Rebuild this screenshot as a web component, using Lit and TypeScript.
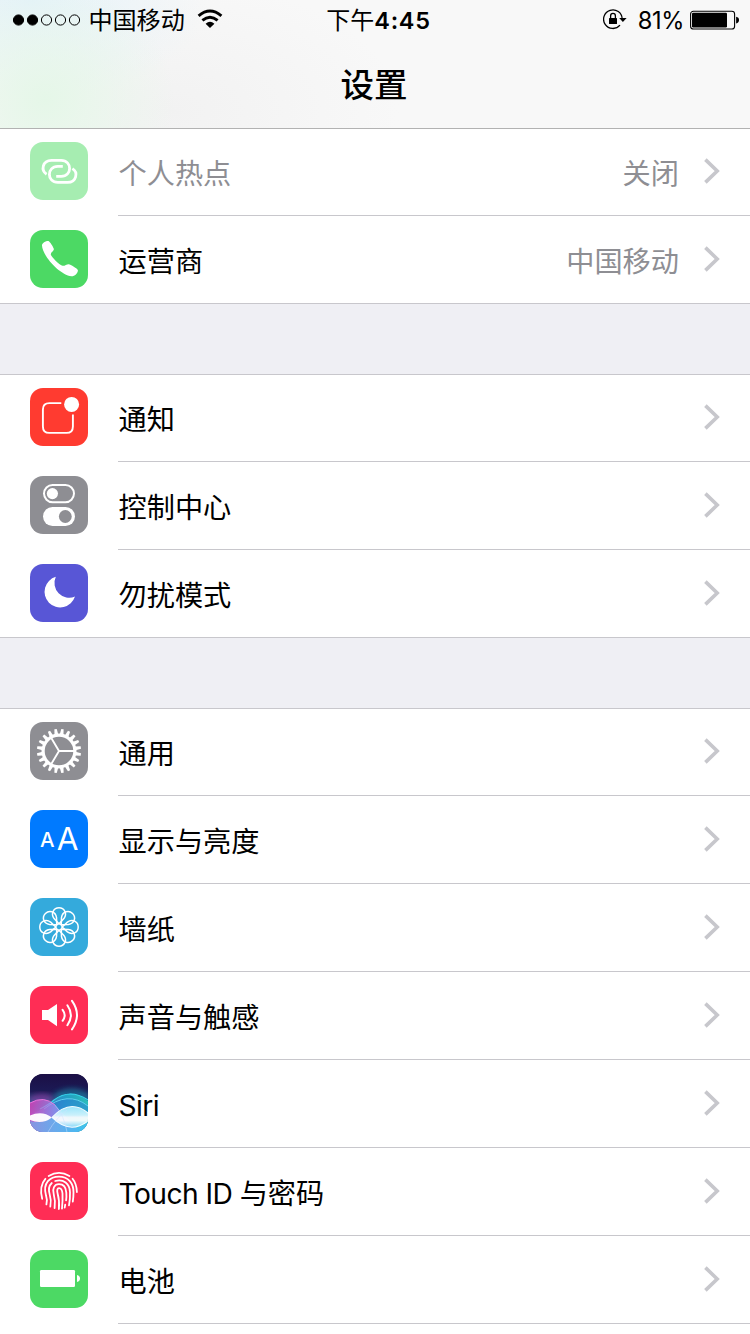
import { LitElement, html, css, svg, TemplateResult } from "lit";
import { customElement, property } from "lit/decorators.js";

interface Item {
  icon: string;
  label: string;
  value?: string;
  dimmed?: boolean;
}

const GROUPS: Item[][] = [
  [
    { icon: "hotspot", label: "个人热点", value: "关闭", dimmed: true },
    { icon: "phone", label: "运营商", value: "中国移动" },
  ],
  [
    { icon: "notifications", label: "通知" },
    { icon: "control", label: "控制中心" },
    { icon: "moon", label: "勿扰模式" },
  ],
  [
    { icon: "gear", label: "通用" },
    { icon: "display", label: "显示与亮度" },
    { icon: "wallpaper", label: "墙纸" },
    { icon: "sound", label: "声音与触感" },
    { icon: "siri", label: "Siri" },
    { icon: "touch", label: "Touch ID 与密码" },
    { icon: "battery", label: "电池" },
  ],
];

const COLORS: Record<string, string> = {
  hotspot: "#a6edb1",
  phone: "#4cd964",
  notifications: "#ff3b30",
  control: "#8e8e93",
  moon: "#5856d6",
  gear: "#8e8e93",
  display: "#007aff",
  wallpaper: "#34aadc",
  sound: "#ff2d55",
  siri: "#1c1246",
  touch: "#ff2d55",
  battery: "#4cd964",
};

const LINK = "M16.6 32.2C10.6 28.6 12.4 18.4 21.5 18.4H31.2C42.4 18.4 42.4 34.4 31.2 34.4H26.2";

const GLYPHS: Record<string, TemplateResult> = {
  hotspot: svg`
    <g fill="none" stroke="#fff" stroke-width="2.8">
      <path d=${LINK} />
      <path d=${LINK} transform="rotate(180 29.5 29.4)" />
    </g>`,
  phone: svg`<path fill="#fff" d="M12 15.6C12 13 15.8 11 18.3 11.1C19.8 11.2 23.9 18 23.9 19.3C23.8 21.2 20.6 22.4 20.8 24.4C21.4 27 29.8 35 32.6 35.8C34.6 36.2 36.8 34 38.8 34.2C40.4 34.4 47.6 38.6 47.9 40C48 43.4 44.6 46.3 41.5 46.2C29.5 45 12.3 25.6 12 15.6Z" />`,
  notifications: svg`
    <path fill="none" stroke="#fff" stroke-width="1.9" d="M31.3 15.1H19.4Q12.9 15.1 12.9 21.6V38.4Q12.9 44.9 19.4 44.9H36.4Q42.9 44.9 42.9 38.4V26.6" />
    <circle cx="41.6" cy="16.4" r="7.5" fill="#fff" />`,
  control: svg`
    <rect x="14" y="9" width="30" height="17.2" rx="8.6" fill="none" stroke="#fff" stroke-width="2" />
    <circle cx="22.4" cy="17.6" r="5.6" fill="#fff" />
    <rect x="13" y="31" width="32" height="19" rx="9.5" fill="#fff" />
    <circle cx="35.3" cy="40.5" r="6.4" fill="#8e8e93" />`,
  moon: svg`<path fill="#fff" d="M25.8 12.8A15.6 15.6 0 1 0 45 32.6A14.8 14.8 0 0 1 25.8 12.8Z" />`,
  gear: svg`
    <g fill="#fff">
      ${Array.from({ length: 20 }, (_, i) => i * 18 + 9).map(
        (a) => svg`<path transform=${`rotate(${a} 29 29)`} d="M27.1 12.5L27.8 6.9H30.2L30.9 12.5Z" />`
      )}
    </g>
    <g fill="none" stroke="#fff">
      <circle cx="29" cy="29" r="15.9" stroke-width="3.2" />
      <path stroke-width="1.9" d="M44 29H29L21 15.6M29 29L21 42.4" />
    </g>`,
  display: svg`
    <g fill="#fff" text-anchor="middle" font-family="Inter, sans-serif">
      <text x="17.2" y="37" font-size="20.5" font-weight="500">A</text>
      <text x="37.5" y="39.7" font-size="31.5" font-weight="400">A</text>
    </g>`,
  wallpaper: svg`
    <g fill="none" stroke="#fff" stroke-width="1.5" transform="translate(29 29)">
      ${[0, 45, 90, 135, 180, 225, 270, 315].map(
        (a) => svg`<path transform=${`rotate(${a})`} d="M0 -3.2L-4.9 -8.4C-8.6 -13.4 -5.4 -19.2 0 -19.2S8.6 -13.4 4.9 -8.4Z" />`
      )}
      <circle r="3.2" />
    </g>`,
  sound: svg`
    <path fill="#fff" d="M12 24H18L27 18V40.3L18 34H12Z" />
    <g fill="none" stroke="#fff" stroke-width="2" stroke-linecap="round">
      <path d="M32.6 23.8Q36.8 29.3 32.6 34.8" />
      <path d="M37.4 19.2Q44.4 29.2 37.4 39.2" />
      <path d="M42 14.8Q52 29 42 43.4" />
    </g>`,
  siri: svg`
    <defs>
      <linearGradient id="sky" x1="0" y1="0" x2="0" y2="1">
        <stop offset="0" stop-color="#1b0f45" />
        <stop offset=".3" stop-color="#1c1a55" />
        <stop offset=".5" stop-color="#2a5a8e" />
        <stop offset="1" stop-color="#4aa0dc" />
      </linearGradient>
      <linearGradient id="pink" x1="0" y1="0" x2="1" y2="0">
        <stop offset="0" stop-color="#f03cc0" />
        <stop offset=".5" stop-color="#a88cf0" />
        <stop offset="1" stop-color="#5aa8f0" />
      </linearGradient>
      <linearGradient id="teal" x1="0" y1="0" x2="1" y2="0">
        <stop offset="0" stop-color="#6a74d8" stop-opacity=".5" />
        <stop offset=".6" stop-color="#22b8dc" />
        <stop offset="1" stop-color="#2fe0c8" />
      </linearGradient>
      <linearGradient id="low" x1="0" y1="0" x2="1" y2="0">
        <stop offset="0" stop-color="#7fa0e6" />
        <stop offset="1" stop-color="#3fc0f4" />
      </linearGradient>
      <linearGradient id="lens" x1="0" y1="0" x2="0" y2="1">
        <stop offset="0" stop-color="#a4ecff" />
        <stop offset=".42" stop-color="#d8f8ff" />
        <stop offset=".52" stop-color="#fff" />
        <stop offset=".68" stop-color="#fff" />
        <stop offset="1" stop-color="#8adcfa" />
      </linearGradient>
      <filter id="soft" x="-20%" y="-150%" width="140%" height="400%"><feGaussianBlur stdDeviation="3" /></filter>
    </defs>
    <rect width="58" height="58" fill="url(#sky)" />
    <path filter="url(#soft)" fill="none" stroke="#e038c8" stroke-width="4" opacity=".7" d="M0 27Q12 20 22 26" />
    <path filter="url(#soft)" fill="none" stroke="#1ec8d8" stroke-width="4" opacity=".7" d="M26 23Q42 13 58 23" />
    <path fill="url(#teal)" opacity=".75" d="M0 40Q14 36 22 28Q40 12 58 27V58H0Z" />
    <path fill="none" stroke="#37d6ec" stroke-width="1.1" d="M10 35Q20 30 24 26Q40 14 58 26" />
    <path fill="#2c77d8" opacity=".45" d="M14 34Q36 16 58 31V44H14Z" />
    <path fill="none" stroke="#63d8f0" stroke-width=".9" d="M14 35Q38 16 58 32" />
    <path fill="url(#pink)" opacity=".72" d="M0 29Q14 21 25 31Q36 43 50 58H0Z" />
    <path fill="none" stroke="#f27be0" stroke-width=".9" d="M0 29Q14 21 25 31" />
    <path fill="url(#low)" opacity=".85" d="M0 47Q12 50 22 43.4Q40 62 58 48V58H0Z" />
    <path fill="#fff" opacity=".96" d="M0 41.5Q12 36 22 43.4Q12 51 0 46Z" />
    <path fill="url(#lens)" opacity=".92" d="M22 43.4Q40 24 58 39V47Q40 61 22 43.4Z" />
    <path fill="none" stroke="#f2fcff" stroke-width="1.1" d="M22 43.4Q40 24 58 39M22 43.4Q40 61 58 47" />
    <path fill="none" stroke="#cfe4ff" stroke-width=".8" opacity=".6" d="M25 31Q34 41 37 58M18 58Q26 44 37 36" />`,
  touch: svg`
    <g fill="none" stroke="#fff" stroke-width="1.8" stroke-linecap="round">
      <path d="M18.7 14.1Q29 7.8 39.4 14.1" />
      <path d="M15.4 16.8Q8.9 24 12.2 36.8" />
      <path d="M42.6 16.8Q46.6 21.8 46.9 30" />
      <path d="M16.4 42.4Q17.6 38 16 33.4C12.4 20.6 20.4 14.6 29 14.6C38.4 14.6 43.6 21.4 43.5 30.2Q43.5 35.6 42.8 39.6" />
      <path d="M20.3 44.6Q21.6 38.6 19.7 32.6C18.1 27.2 19.4 23.2 21.8 21" />
      <path d="M25.2 19C33.4 16.4 39.8 21.8 40 30.2Q40.2 37.4 39 43.4" />
      <path d="M24.6 46.2Q25.6 38.6 23.7 32C22 26.8 24.4 22.2 29 22.2C34 22.2 36 26 36.3 30.6Q36.6 34.6 36.1 38.4" />
      <path d="M35.2 42.6L34.7 45.6" />
      <path d="M28.9 47Q29.7 38.4 27.6 31.4C26.7 28.2 27.4 26.1 29 26.1C31.6 26.1 32.2 28.6 32.5 31.4Q32.8 38 32 46.6" />
    </g>`,
  battery: svg`
    <rect x="10" y="20" width="35" height="17" rx="1.2" fill="#fff" />
    <path fill="#fff" d="M47 25Q50 25.6 50 28.5T47 32Z" />`,
};

@customElement("settings-row")
class SettingsRow extends LitElement {
  @property({ attribute: false }) item!: Item;

  static styles = css`
    :host {
      display: flex;
      height: 88px;
      box-sizing: border-box;
      padding-left: 30px;
      gap: 30px;
    }
    .icon {
      flex: none;
      width: 58px;
      height: 58px;
      margin-top: 14px;
      border-radius: 13px;
      overflow: hidden;
    }
    .body {
      flex: 1;
      display: flex;
      align-items: center;
      padding-right: 29px;
      border-bottom: 1px solid #c8c7cc;
    }
    :host([last]) .body {
      border-bottom-color: transparent;
    }
    .label,
    .value {
      font-size: 28.2px;
      line-height: 40px;
      padding-top: 5px;
      white-space: pre;
    }
    .label {
      flex: 1;
      padding-left: 0.5px;
      color: #000;
    }
    .latin {
      letter-spacing: -0.55px;
    }
    .value,
    .dimmed {
      color: #8e8e93;
    }
    .chevron {
      flex: none;
      width: 18px;
      height: 28px;
      margin: 0 0 2px 24px;
    }
  `;

  render() {
    const { icon, label, value, dimmed } = this.item;
    const latin = label.match(/^[A-Za-z ]*/)![0];
    return html`
      <svg class="icon" viewBox="0 0 58 58">
        <rect width="58" height="58" fill=${COLORS[icon]} />
        ${GLYPHS[icon]}
      </svg>
      <div class="body">
        <span class="label ${dimmed ? "dimmed" : ""}"
          >${latin ? html`<span class="latin">${latin}</span>` : null}${label.slice(latin.length)}</span
        >
        ${value ? html`<span class="value">${value}</span>` : null}
        <svg class="chevron" viewBox="0 0 18 28">
          <path d="M2.4 2.6L14.2 14L2.4 25.4" fill="none" stroke="#c7c7cc" stroke-width="3.6" />
        </svg>
      </div>
    `;
  }
}

@customElement("status-bar")
class StatusBar extends LitElement {
  static styles = css`
    :host {
      display: grid;
      grid-template-columns: 1fr auto 1fr;
      align-items: center;
      height: 40px;
      padding: 0 10px 0 12px;
      color: #000;
    }
    .side {
      display: flex;
      align-items: center;
    }
    .right {
      justify-content: flex-end;
    }
    svg {
      flex: none;
      display: block;
    }
    .carrier {
      font-size: 24.1px;
      line-height: 38px;
      margin: 2px 12px 0 7.4px;
    }
    .time {
      font-size: 24px;
      line-height: 38px;
      padding: 2px 0 0 5px;
    }
    .clock {
      font-weight: 600;
      font-size: 23.5px;
      letter-spacing: 0.7px;
    }
    .percent {
      font-size: 23.6px;
      line-height: 38px;
      letter-spacing: -0.4px;
      margin: 2px 6px 0 11px;
    }
    .lock,
    .wifi {
      margin-bottom: 2px;
    }
  `;

  render() {
    return html`
      <div class="side">
        <svg width="69" height="12" viewBox="0 0 69 12">
          ${[0, 1, 2, 3, 4].map(
            (i) => svg`<circle cx=${6.5 + i * 14} cy="6" r="5.1" fill=${i < 2 ? "#000" : "none"} stroke="#000" stroke-width="1" />`
          )}
        </svg>
        <span class="carrier">中国移动</span>
        <svg class="wifi" width="26" height="20" viewBox="0 0 26 20">
          <g fill="none" stroke="#000" stroke-width="2.9">
            <path d="M1.6 6.9Q13 -2.9 24.4 6.9" />
            <path d="M5.4 11.4Q13 4.9 20.6 11.4" />
          </g>
          <path d="M8.6 14.7Q13 10.9 17.4 14.7L13 19Z" />
        </svg>
      </div>
      <div class="time">下午<span class="clock">4:45</span></div>
      <div class="side right">
        <svg class="lock" width="24" height="22" viewBox="0 0 24 22">
          <path d="M19.2 10.9A9.3 9.3 0 1 0 17 17.2" fill="none" stroke="#000" stroke-width="1.3" />
          <path d="M16.2 10.1H23.6L19.9 13.9Z" />
          <rect x="6" y="10" width="8" height="6" rx=".5" />
          <path d="M7.6 10.5V8Q7.6 5.4 10 5.4T12.4 8V10.5" fill="none" stroke="#000" stroke-width="1.3" />
        </svg>
        <span class="percent">81%</span>
        <svg width="50" height="20" viewBox="0 0 50 20">
          <rect x=".6" y="1.2" width="44" height="17.8" rx="2.8" fill="none" stroke="#000" stroke-width="1.1" />
          <rect x="2" y="2.7" width="35" height="14.8" rx="1.2" />
          <path d="M46.1 6.8Q49 7.3 49 10.1T46.1 13.4Z" />
        </svg>
      </div>
    `;
  }
}

@customElement("app-root")
class AppRoot extends LitElement {
  static styles = css`
    :host {
      display: block;
      width: 750px;
      height: 1334px;
      overflow: hidden;
      background: #efeff4;
      font-family: Inter, "Noto Sans CJK SC", sans-serif;
      font-weight: 400;
    }
    .header {
      height: 128px;
      background:
        radial-gradient(ellipse 130px 120px at 45px 100px, #e5f7e8, rgba(229, 247, 232, 0)),
        radial-gradient(ellipse 180px 100px at 30px 0, #e4f2f9, rgba(228, 242, 249, 0)),
        radial-gradient(ellipse 230px 130px at 170px 110px, #f2f2f2, rgba(242, 242, 242, 0)),
        #f8f8f8;
    }
    .title {
      margin: 0;
      padding: 20px 2px 0 0;
      text-align: center;
      font-size: 33.5px;
      font-weight: 500;
      line-height: 50px;
      color: #000;
    }
    .groups {
      display: flex;
      flex-direction: column;
      gap: 70px;
    }
    .group {
      background: #fff;
      box-shadow: inset 0 1px #c8c7cc, inset 0 -1px #c8c7cc;
    }
    .group:first-child {
      box-shadow: inset 0 1px #b2b2b2, inset 0 -1px #c8c7cc;
    }
    .group:last-child {
      height: 626px;
      box-shadow: inset 0 1px #c8c7cc;
    }
  `;

  render() {
    return html`
      <div class="header" lang="zh-CN">
        <status-bar></status-bar>
        <h1 class="title">设置</h1>
      </div>
      <div class="groups" lang="zh-CN">
        ${GROUPS.map(
          (items, g) => html`<div class="group">
            ${items.map(
              (item, i) =>
                html`<settings-row .item=${item} ?last=${i === items.length - 1 && g < GROUPS.length - 1}></settings-row>`
            )}
          </div>`
        )}
      </div>
    `;
  }
}
